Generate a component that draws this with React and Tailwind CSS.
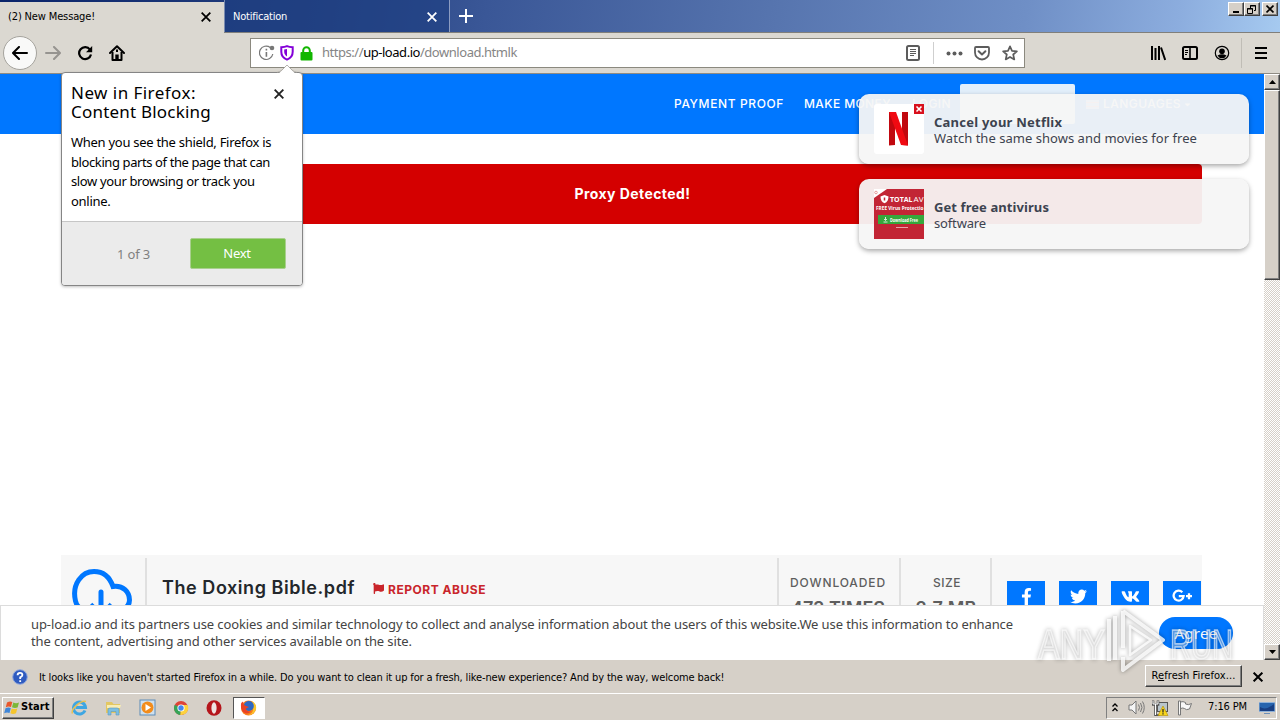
import {FaFacebookF, FaTwitter, FaVk, FaFlag, FaCaretDown} from 'react-icons/fa';

const UI = "font-['DejaVu_Sans_Condensed','DejaVu_Sans',sans-serif] [font-stretch:condensed]";
const NOTO = "font-['Noto_Sans',sans-serif]";
const INTER = "font-['Inter',sans-serif]";

// classic Windows raised edge
const RAISED = 'bg-[#d6d0c8] border border-t-white border-l-white border-r-[#404040] border-b-[#404040] shadow-[inset_-1px_-1px_0_#808080]';

const CloseX = ({className, size = 9, stroke = 1.8}) => (
    <svg className={className} width={size} height={size} viewBox="0 0 9 9" stroke="currentColor" strokeWidth={stroke} fill="none">
        <path d="M.6.6l7.8 7.8M8.4.6L.6 8.4" />
    </svg>
);

const TabBar = () => (
    <div className={`${UI} flex h-[33px] shrink-0 border-b border-[#807f7b] bg-[linear-gradient(100deg,#0a246a_0%,#24407f_25%,#3a5797_38%,#5674ae_60%,#6f8fc6_80%,#8cadde_92%,#a6caf0_100%)] text-[11px]`}>
        <div className="-mb-px mt-[2px] flex w-[224px] items-center justify-between bg-[#dbd8d1] pl-2 pr-[13px] text-black">
            <span className="pb-px tracking-[-0.14px]">(2) New Message!</span>
            <CloseX className="mb-[2px]" size={10} stroke={1.6} />
        </div>
        <div className="flex w-[226px] items-center justify-between border-l border-r border-l-[#7b8cb0] border-r-[#8b9cc2] bg-[#1f4083]/70 pl-2 pr-[12px] pt-[2px] text-white">
            <span className="tracking-[-0.23px]">Notification</span>
            <CloseX size={10} stroke={1.6} />
        </div>
        <div className="flex w-[32px] items-center justify-center text-white">
            <svg width="14" height="14" viewBox="0 0 14 14" stroke="currentColor" strokeWidth="2"><path d="M7 0v14M0 7h14" /></svg>
        </div>
        <div className="ml-auto mr-[2px] mt-[2px] flex h-[14px]">
            <span className={`${RAISED} flex w-4 items-end justify-center pb-[2px]`}>
                <svg width="8" height="2"><path d="M1 1h6" stroke="#000" strokeWidth="2" /></svg>
            </span>
            <span className={`${RAISED} flex w-4 items-center justify-center`}>
                <svg width="10" height="9" fill="none" stroke="#000"><path d="M3.5 3V.5h5v5H7M3 1h6M.5 3.5h5v5h-5zM0 4h6" /></svg>
            </span>
            <span className={`${RAISED} ml-[2px] flex w-4 items-center justify-center text-black`}>
                <CloseX size={8} />
            </span>
        </div>
    </div>
);

const UrlBar = () => (
    <div className="ml-[125px] flex h-[30px] w-[775px] items-center border border-[#8b897f] bg-white text-[#606060]">
        <svg className="ml-2" width="18" height="16" viewBox="0 0 18 16" fill="none" stroke="#777">
            <path d="M11.2 2.4A6.7 6.7 0 1 0 13.8 9" strokeWidth="1.2" />
            <path d="M7.4 7v4.8M7.4 3.8v1.6" strokeWidth="1.6" />
            <circle cx="13" cy="3" r="2.3" fill="#777" stroke="none" />
        </svg>
        <svg className="ml-[3px]" width="14" height="16" viewBox="0 0 14 16" fill="none" stroke="#8300d8">
            <path d="M7 1.2C5.2 2 3.2 2.2 1.3 2.2v4.6c0 4 2.4 6.6 5.7 7.8 3.3-1.2 5.7-3.8 5.7-7.8V2.2C10.8 2.2 8.8 2 7 1.2z" strokeWidth="2" />
            <path d="M7 4v7.4C5 10.2 4.2 8.8 4.2 6.8V4.6C5.2 4.5 6.2 4.3 7 4z" fill="#8300d8" stroke="none" />
        </svg>
        <svg className="ml-[6px]" width="13" height="15" viewBox="0 0 13 15">
            <path d="M3.2 7V4.5a3.3 3.3 0 0 1 6.6 0V7" fill="none" stroke="#12b600" strokeWidth="2" />
            <rect x=".5" y="6" width="12" height="8.5" rx="1" fill="#12b600" />
        </svg>
        <span className={`${NOTO} ml-[9px] text-[13px] tracking-[-0.46px] text-[#858585]`}>
            https://<span className="text-black">up-load.io</span>/download.htmlk
        </span>
        <div className="ml-auto flex h-full items-center">
            <svg width="14" height="16" viewBox="0 0 14 16" fill="none" stroke="#5c5c5c">
                <rect x="1" y="1" width="12" height="14" rx="1.5" strokeWidth="2" />
                <path d="M4 4.5h6M4 6.5h6M4 8.5h6M4 10.5h4" />
            </svg>
            <span className="ml-[13px] h-[22px] w-px bg-[#cfcfcf]" />
            <svg className="ml-3" width="17" height="5" fill="#5c5c5c"><circle cx="2.5" cy="2.5" r="2" /><circle cx="8.5" cy="2.5" r="2" /><circle cx="14.5" cy="2.5" r="2" /></svg>
            <svg className="ml-[11px]" width="16" height="15" viewBox="0 0 16 15" fill="none" stroke="#5c5c5c" strokeLinejoin="round" strokeLinecap="round">
                <path d="M2 1h12a1 1 0 0 1 1 1v4.500a7 7 0 0 1-14 0V2a1 1 0 0 1 1-1z" strokeWidth="1.8" />
                <path d="M4.6 5.2L8 8.4l3.4-3.2" strokeWidth="2" />
            </svg>
            <svg className="ml-3 mr-[6px]" width="16" height="16" viewBox="0 0 16 16" fill="none" stroke="#5c5c5c" strokeWidth="1.7" strokeLinejoin="round">
                <path d="M8 1.3l2 4.5 4.9.5-3.7 3.2 1.1 4.9L8 11.9l-4.3 2.5 1.1-4.9L1.1 6.3 6 5.8z" />
            </svg>
        </div>
    </div>
);

const Toolbar = () => (
    <div className="flex h-[41px] shrink-0 items-center border-b border-[#8f8b83] bg-[#dbd8d1] text-black">
        <div className="ml-[3px] flex size-[34px] items-center justify-center rounded-full border border-[#a5a39d] bg-[#f9f9f8]">
            <svg width="16" height="14" viewBox="0 0 16 14" fill="none" stroke="currentColor" strokeWidth="2" strokeLinecap="round" strokeLinejoin="round"><path d="M7 1L1 7l6 6M1.5 7H15" /></svg>
        </div>
        <svg className="ml-2 text-[#969490]" width="16" height="14" viewBox="0 0 16 14" fill="none" stroke="currentColor" strokeWidth="2" strokeLinecap="round" strokeLinejoin="round"><path d="M9 1l6 6-6 6M14.5 7H1" /></svg>
        <svg className="ml-4" width="16" height="16" viewBox="0 0 16 16" fill="none" stroke="currentColor" strokeWidth="2.2">
            <path d="M13 4.600A6 6 0 1 0 14 9.500" />
            <path d="M15.2 1v6.200H9z" fill="currentColor" stroke="none" />
        </svg>
        <svg className="ml-4" width="16" height="16" viewBox="0 0 16 16" fill="none" stroke="currentColor" strokeWidth="2" strokeLinejoin="round">
            <path d="M1 8l7-6.800L15 8" strokeLinecap="round" />
            <path d="M3.5 7v8h9V7" />
            <path d="M6.3 9.5h3.4V15H6.3z" fill="currentColor" stroke="none" />
            <path d="M8 4.5v2.5" />
        </svg>
        <UrlBar />
        <div className="ml-auto flex h-full items-center">
            <svg width="16" height="16" viewBox="0 0 16 16" stroke="currentColor" strokeWidth="2"><path d="M2 1v14M5.5 3v12M9 1v14M11 2.5L15.2 15" /></svg>
            <svg className="ml-4" width="16" height="14" viewBox="0 0 16 14" fill="none" stroke="currentColor"><rect x="1" y="1" width="14" height="12" rx="1.5" strokeWidth="2" /><path d="M8 1v12" strokeWidth="1.6" /><path d="M3 4.5h3M3 6.5h3M3 8.5h2" /></svg>
            <svg className="ml-4" width="16" height="16" viewBox="0 0 16 16" fill="none" stroke="currentColor">
                <circle cx="8" cy="8" r="6.7" strokeWidth="1.2" />
                <circle cx="8" cy="6.2" r="2.8" fill="currentColor" stroke="none" />
                <path d="M3.5 10.5Q8 8.2 12.5 10.5Q11 13.3 8 13.3T3.5 10.5z" fill="currentColor" stroke="none" />
            </svg>
            <span className="ml-[11px] h-[30px] w-px bg-[#c0bdb6]" />
            <svg className="ml-[13px] mr-[13px]" width="12" height="12" stroke="currentColor" strokeWidth="2"><path d="M0 1h12M0 6h12M0 11h12" /></svg>
        </div>
    </div>
);

const DoorHanger = () => (
    <div className={`${NOTO} absolute left-[61px] top-[72px] z-20 flex h-[214px] w-[242px] flex-col rounded-[4px] border border-[#858585] bg-white text-black shadow-[0_1px_3px_rgba(0,0,0,0.25)]`}>
        <svg className="absolute right-[5px] top-[-9px]" width="20" height="10"><path d="M0 9.500Q3 9 5 6.500L10 1l5 5.500Q17 9 20 9.500V10H0z" fill="#fff" /><path d="M0 8.500Q3 8 5 6L10 1l5 5Q17 8 20 8.500" fill="none" stroke="#a3a19c" strokeWidth=".8" /></svg>
        <div className="flex h-[149px] flex-col border-b border-[#c6c6c6] px-[9px] pt-[10px]">
            <div className="flex justify-between">
                <h2 className="text-[17px] leading-[19px]">
                    <span className="tracking-[0.46px]">New in Firefox:</span><br />
                    <span className="tracking-[0.21px]">Content Blocking</span>
                </h2>
                <CloseX className="mr-[9px] mt-[6px] text-[#222]" size={10} stroke={1.7} />
            </div>
            <p className="mt-[12px] whitespace-nowrap text-[13px] leading-[19.700px] tracking-[-0.28px]">
                When you see the shield, Firefox is<br />
                <span className="tracking-[-0.4px]">blocking parts of the page that can</span><br />
                <span className="tracking-[-0.36px]">slow your browsing or track you</span><br />
                online.
            </p>
        </div>
        <div className="flex grow items-start rounded-b-[3px] bg-[#ebebeb] pt-4 text-[13px]">
            <span className="ml-[55px] w-[73px] pt-[6px] leading-5 tracking-[-0.16px] text-[#808080]">1 of 3</span>
            <button className="h-[31px] w-[96px] rounded-[2px] border border-[#a9cf8e] bg-[#74bf43] pr-[2px] tracking-[-0.3px] text-white">Next</button>
        </div>
    </div>
);

const Toast = ({title, text, children}) => (
    <div className={`${NOTO} flex h-[70px] w-[390px] items-center rounded-[10px] bg-[#f6f6f6]/95 pl-[15px] text-[13px] leading-4 text-[#3c4350] shadow-[0_2px_5px_rgba(0,0,0,0.35)]`}>
        {children}
        <div className="ml-[10px] pt-[2px]">{title}<p>{text}</p></div>
    </div>
);

const Toasts = () => (
    <div className="absolute left-[859px] top-[94px] z-10 flex flex-col gap-[15px]">
        <Toast title={<p className="font-bold tracking-[0.23px]">Cancel your Netflix</p>} text={<span className="tracking-[0.03px]">Watch the same shows and movies for free</span>}>
            <svg width="50" height="50">
                <rect width="50" height="50" rx="3" fill="#fff" />
                <path d="M15 8h6v33l-6 .6zM28 8h6v33.600l-6-.6z" fill="#c1080f" />
                <path d="M15 8h7l12 33.600-7-.6z" fill="#f00a12" />
                <rect x="40" width="10" height="10" fill="#d8101c" />
                <path d="M42.500 2.500l5 5M47.500 2.500l-5 5" stroke="#fff" strokeWidth="1.6" />
            </svg>
        </Toast>
        <Toast title={<p className="font-bold tracking-[0.08px]">Get free antivirus</p>} text={<span className="tracking-[-0.15px]">software</span>}>
            <svg width="50" height="50" fontFamily="Open Sans, sans-serif">
                <rect width="50" height="50" fill="#c22535" />
                <path d="M0 0h13L0 9z" fill="#fff" />
                <circle cx="2" cy="3.500" r="1.300" fill="none" stroke="#d77" strokeWidth=".7" />
                <path d="M10.500 6l4 1.500c0 3.500-1.200 5.500-4 6.700-2.800-1.200-4-3.200-4-6.700z" fill="#fff" />
                <path d="M10.500 8.500v3" stroke="#c22535" strokeWidth="1.500" />
                <text x="16" y="12.500" fontSize="6.500" fontWeight="700" fill="#fff" textLength="22.500" lengthAdjust="spacingAndGlyphs">TOTAL</text>
                <text x="39.500" y="12.500" fontSize="6.500" fill="#fff" textLength="10" lengthAdjust="spacingAndGlyphs">AV</text>
                <text x="2" y="21" fontSize="5" fontWeight="700" fill="#fff" textLength="47.500" lengthAdjust="spacingAndGlyphs">FREE Virus Protectio</text>
                <rect x="4" y="26" width="46" height="9" fill="#35a83c" />
                <path d="M11.500 28v3M10 30l1.500 1.500L13 30M9.500 33h4" stroke="#fff" strokeWidth=".8" fill="none" />
                <text x="16" y="32.500" fontSize="4.500" fontWeight="700" fill="#fff" textLength="28" lengthAdjust="spacingAndGlyphs">Download Free</text>
                <path d="M22 38.500h12" stroke="#e9a2a8" />
            </svg>
        </Toast>
    </div>
);

const SiteHeader = () => (
    <div className={`${INTER} flex h-[60px] shrink-0 items-center whitespace-nowrap bg-[#0077ff] pl-[674px] text-[12px] font-medium text-white`}>
        <span className="w-[130px] tracking-[0.62px]">PAYMENT PROOF</span>
        <span className="w-[108px] tracking-[0.4px]">MAKE MONEY</span>
        <span className="w-[48px] tracking-[0.4px]">LOGIN</span>
        <span className="h-10 w-[115px] rounded-[2px] bg-[#e2effb]" />
        <span className="ml-[11px] flex h-[9px] w-[13px] flex-col justify-between bg-white/60 py-[2px]"><i className="h-px bg-red-300" /><i className="h-px bg-red-300" /></span>
        <span className="ml-1 tracking-[0.45px]">LANGUAGES</span>
        <FaCaretDown className="ml-[2px] size-[9px]" />
    </div>
);

const SOCIALS = [
    {name: 'facebook', icon: <FaFacebookF className="size-[17px]" />},
    {name: 'twitter', icon: <FaTwitter className="size-[17px]" />},
    {name: 'vk', icon: <FaVk className="size-[19px]" />},
    {
        name: 'google plus', icon: (
            <svg width="21" height="14" viewBox="0 0 21 14" fill="none" stroke="currentColor" strokeWidth="2.300">
                <path d="M10.300 3.200A5 5 0 1 0 11.600 7.200H6.800M14 7.200h6M17 4.200v6" />
            </svg>
        )
    },
];

const FileCard = () => (
    <div className={`${INTER} ml-[61px] mt-[331px] flex h-[110px] w-[1141px] shrink-0 bg-[#f7f7f7] pt-[3px]`}>
        <div className="w-[86px] border-r-2 border-[#e0e0e0] pl-[10px] pt-[11px]">
            <svg width="61" height="48" viewBox="0 0 61 48" fill="none" stroke="#0077ff" strokeWidth="5">
                <path d="M11 40.500A13 13 0 0 1 4.500 32C.5 15 11 2.500 23 2.500c9 0 15.500 5 19 15C52 16 58.500 23 58.500 31c0 5-3 8-7 10" />
                <path d="M30 23v24" strokeLinecap="round" />
                <path d="M19.500 35.500L30 46l10.500-10.500" />
            </svg>
        </div>
        <div className="w-[632px] border-r-2 border-[#e0e0e0] pl-[15px] pt-[16px]">
            <div className="flex items-start whitespace-nowrap leading-7">
                <span className="text-[18px] font-semibold tracking-[0.56px] text-[#23272b]">The Doxing Bible.pdf</span>
                <FaFlag className="ml-[18px] mt-[9px] size-[11px] text-[#c9252b]" />
                <span className="ml-[4px] pt-[2px] text-[12px] font-bold tracking-[0.52px] text-[#c9252b]">REPORT ABUSE</span>
            </div>
            <p className="-mt-px text-[12px] leading-5 tracking-[0.5px] text-[#555]">Uploaded: 14-06-2018 by Guest</p>
        </div>
        <div className="w-[122px] border-r-2 border-[#e0e0e0] pt-[15px] text-center font-medium text-[#5e5e5e]">
            <p className="pr-[2px] text-[12px] leading-5 tracking-[0.88px]">DOWNLOADED</p>
            <p className="whitespace-nowrap pr-[2px] pt-[2px] text-[18px] font-semibold leading-7">473 TIMES</p>
        </div>
        <div className="w-[91px] border-r-2 border-[#e0e0e0] pt-[15px] text-center font-medium text-[#5e5e5e]">
            <p className="pl-[3px] text-[12px] leading-5 tracking-[0.51px]">SIZE</p>
            <p className="whitespace-nowrap pl-px pt-[2px] text-[18px] font-semibold leading-7 tracking-[0.17px]">2.7 MB</p>
        </div>
        <div className="flex gap-[14px] pl-[15px] pt-[23px]">
            {SOCIALS.map((s) => (
                <a key={s.name} className="flex h-[30px] w-[38px] items-center justify-center bg-[#0077ff] text-white">{s.icon}</a>
            ))}
        </div>
    </div>
);

const CookieBanner = () => (
    <div className={`${NOTO} absolute bottom-0 left-0 flex h-[55px] w-full items-start border border-b-0 border-[#dcdcdc] bg-white text-[13px] leading-[17px] text-[#444]`}>
        <p className="ml-[30px] w-[1128px] whitespace-nowrap pt-[10px]">
            <span className="tracking-[-0.11px]">up-load.io and its partners use cookies and similar technology to collect and analyse information about the users of this website.We use this information to enhance</span><br />
            <span className="tracking-[-0.13px]">the content, advertising and other services available on the site.</span>
        </p>
        <button className="mt-[11px] h-8 w-[74px] shrink-0 rounded-full bg-[#0077ff] text-[15px] tracking-[0.27px] text-white">Agree</button>
    </div>
);

const ScrollBar = () => (
    <div className="flex w-4 flex-col bg-[repeating-conic-gradient(#d6d0c8_0%_25%,#fff_0%_50%)] bg-[length:2px_2px]">
        <span className={`${RAISED} flex h-4 items-center justify-center`}><svg width="7" height="4"><path d="M0 4L3.500 0 7 4z" /></svg></span>
        <span className={`${RAISED} h-[190px]`} />
        <span className={`${RAISED} mt-auto flex h-4 items-center justify-center`}><svg width="7" height="4"><path d="M0 0l3.500 4L7 0z" /></svg></span>
    </div>
);

const Notice = () => (
    <div className={`${UI} flex h-[33px] shrink-0 items-center bg-[#d6d0c8] pl-[12px] pt-px text-[11px] text-black`}>
        <svg width="16" height="16">
            <circle cx="8" cy="8" r="7.300" fill="#2f5bc0" stroke="#93a9dc" />
            <path d="M5.600 6.200Q5.600 3.800 8 3.800t2.400 2.200Q10.400 7.400 8.200 8.400V10M8.200 11.200v1.800" fill="none" stroke="#fff" strokeWidth="1.800" />
        </svg>
        <span className="ml-[11px] whitespace-nowrap pt-[2px] tracking-[-0.136px]">It looks like you haven't started Firefox in a while. Do you want to clean it up for a fresh, like-new experience? And by the way, welcome back!</span>
        <button className={`${RAISED} mb-[2px] ml-auto h-[22px] w-[97px] pt-px tracking-[0.08px]`}>R<u>e</u>fresh Firefox...</button>
        <CloseX className="ml-[11px] mr-[17px]" size={10} />
    </div>
);

const Taskbar = () => (
    <div className={`${UI} flex h-[27px] shrink-0 items-center border-t border-white bg-[#d6d0c8] pt-px text-[11px] text-black`}>
        <button className={`${RAISED} ml-[2px] flex h-[22px] w-[52px] items-center pl-[1px] font-bold`}>
            <svg width="16" height="15" viewBox="0 0 16 15">
                <path d="M3 2.500Q6 .8 8.300 2L7 7Q4.500 6 1.800 7.200z" fill="#e8572b" />
                <path d="M9.300 2.500Q12 3.800 15 2.500L13.600 7.500Q10.800 8.500 8 7.300z" fill="#7cb737" />
                <path d="M1.500 8.300Q4.500 7 6.800 8.200L5.500 13Q3 12 .2 13.200z" fill="#3f86d8" />
                <path d="M7.700 8.500Q10.500 9.700 13.300 8.500L12 13.300Q9 14.500 6.400 13.300z" fill="#f5c52c" />
            </svg>
            <span className="ml-px tracking-[0.1px]">Start</span>
        </button>
        <div className="ml-[17px] flex items-center gap-[17px]">
            <svg width="17" height="17" viewBox="0 0 17 17" fill="none">
                <path d="M14 11.500A6 6 0 1 1 14.500 8.500H4.500" stroke="#3ea6e2" strokeWidth="3" />
                <path d="M1.500 14.500C-.5 11 9 1 15 2.500" stroke="#e9c154" strokeWidth="1.500" />
            </svg>
            <svg width="17" height="17" viewBox="0 0 17 17">
                <path d="M1 3h6l1.500 2H15v9H1z" fill="#e3c762" />
                <path d="M2 6h14l-1 3H2z" fill="#f8edb4" />
                <path d="M3 16v-5q0-2 2-2h7q2 0 2 2v5h-3v-3.500H6V16z" fill="#7cbfe2" stroke="#5b98bf" strokeWidth=".6" />
            </svg>
            <svg width="17" height="17" viewBox="0 0 17 17">
                <rect x="1" y="1" width="15" height="15" fill="#cfe0ee" stroke="#5c8cb8" />
                <circle cx="8.500" cy="8.500" r="6" fill="#f28c1c" />
                <path d="M6.500 5v7l5.500-3.500z" fill="#fff" />
            </svg>
            <svg width="16" height="16" viewBox="0 0 16 16">
                <circle cx="8" cy="8" r="7" fill="#dd4437" />
                <path d="M8 8L1.800 4.800A7 7 0 0 0 7.500 15z" fill="#36a457" />
                <path d="M8 8L7.300 15A7 7 0 0 0 14.500 5H8z" fill="#fdd23c" />
                <circle cx="8" cy="8" r="3.600" fill="#fff" /><circle cx="8" cy="8" r="2.700" fill="#4486ee" />
            </svg>
            <svg width="16" height="16" viewBox="0 0 16 16">
                <ellipse cx="8" cy="8" rx="7.500" ry="7.700" fill="#b5151b" />
                <ellipse cx="8" cy="8" rx="2.600" ry="5.700" fill="#eee3e1" />
            </svg>
        </div>
        <div className="ml-[11px] flex h-[22px] w-8 items-center justify-center border border-b-white border-l-[#555] border-r-white border-t-[#555] bg-white pr-px">
            <svg width="17" height="17" viewBox="0 0 17 17">
                <circle cx="8.500" cy="9" r="7.500" fill="#f77b1c" />
                <path d="M12 2q5 3 4 8-2 6-8 6 6-2 5-8z" fill="#fbc62b" />
                <circle cx="8.800" cy="7" r="5" fill="#2e68c4" />
                <path d="M1.200 4Q0 9 3 13q4 3 8-.5-5 .5-5-3l3-1.500-3-1Q3 6 3 2.500z" fill="#ea4224" />
            </svg>
        </div>
        <div className="ml-auto mr-[3px] flex h-[22px] w-[171px] items-center border border-b-white border-l-[#808080] border-r-white border-t-[#808080]">
            <svg className="ml-[5px] shrink-0" width="6" height="9" fill="none" stroke="#000" strokeWidth="1.300"><path d="M.5 3.500L3 1l2.500 2.500M.5 8L3 5.500 5.500 8" /></svg>
            <svg className="ml-[10px] shrink-0" width="17" height="15" viewBox="0 0 17 15" fill="none" stroke="#777">
                <path d="M1 5h3l4-4v13l-4-4H1z" fill="#f4f4f4" /><path d="M10.500 4.500q2 3 0 6M12.500 3q3 4.500 0 9M14.500 1.500q3.500 6 0 12" />
            </svg>
            <svg className="ml-[7px] shrink-0" width="17" height="16" viewBox="0 0 17 16">
                <rect x="5.500" y="2.500" width="10" height="9" fill="#b9c5cc" stroke="#555" />
                <path d="M1 .5v4h5v-4M3.500 4.500v11h4" fill="none" stroke="#555" strokeWidth="2.600" /><path d="M1 1v3h5V1M3.500 4v11" fill="none" stroke="#fff" />
                <path d="M11 6l5 9.500H6z" fill="#f8d51b" stroke="#b18d00" strokeWidth=".6" /><path d="M11 9v3.500M11 13.300v1.200" stroke="#222" strokeWidth="1.200" />
            </svg>
            <svg className="ml-[8px] shrink-0" width="16" height="16" viewBox="0 0 16 16" fill="#f8f8f8" stroke="#777">
                <path d="M3.500 2Q6 1 8.500 2.500V4q3 1.500 6-.5L12.500 9Q9 10.500 7.500 8.500 6 7.500 3.500 8.500z" /><path d="M1.500 1h2v14h-2z" />
            </svg>
            <span className="ml-[15px] whitespace-nowrap tracking-[-0.12px]">7:16 PM</span>
            <svg className="ml-auto mr-px shrink-0" width="16" height="14" viewBox="0 0 16 14"><path d="M0 1.500h16v9H0z" fill="#2764ae" stroke="#8fb1d8" /><path d="M1 6q6 4 14-3v7H1z" fill="#193f83" /><path d="M5 12.500h6" stroke="#6d8fb8" /></svg>
        </div>
    </div>
);

const Watermark = () => (
    <svg className="absolute left-[1034px] top-[606px] z-30 drop-shadow-[0_0_2px_rgba(0,0,0,0.45)]" width="202" height="68" viewBox="0 0 202 68" fill="none" stroke="#fff">
        <g fill="#fff" fillOpacity=".35" strokeOpacity=".6" strokeWidth="1.500" fontSize="42" fontFamily="Liberation Sans Narrow, Liberation Sans, sans-serif">
            <text x="4" y="53" textLength="67" lengthAdjust="spacingAndGlyphs">ANY</text>
            <text x="136" y="53" textLength="63" lengthAdjust="spacingAndGlyphs">RUN</text>
        </g>
        <g strokeWidth="4" strokeOpacity=".8" strokeLinejoin="round">
            <path d="M75 13v42M81 10v44M89 5l40 29-40 30V51M89 42V5" />
            <path d="M96 20v29l21-15z" strokeWidth="2.500" />
        </g>
    </svg>
);

export default function App() {
    return (
        <div className="relative flex h-[720px] w-[1280px] flex-col overflow-hidden bg-white">
            <TabBar />
            <Toolbar />
            <div className="flex h-[586px] shrink-0">
                <div className="relative flex w-[1264px] flex-col overflow-hidden bg-white">
                    <SiteHeader />
                    <div className="ml-[61px] mt-[30px] flex h-[60px] w-[1141px] shrink-0 items-center justify-center rounded-[4px] bg-[#d40000]">
                        <span className={`${INTER} pb-[2px] pl-[2px] text-[14px] font-bold tracking-[0.43px] text-white`}>Proxy Detected!</span>
                    </div>
                    <FileCard />
                    <CookieBanner />
                </div>
                <ScrollBar />
            </div>
            <Notice />
            <Taskbar />
            <DoorHanger />
            <Toasts />
            <Watermark />
        </div>
    );
}
